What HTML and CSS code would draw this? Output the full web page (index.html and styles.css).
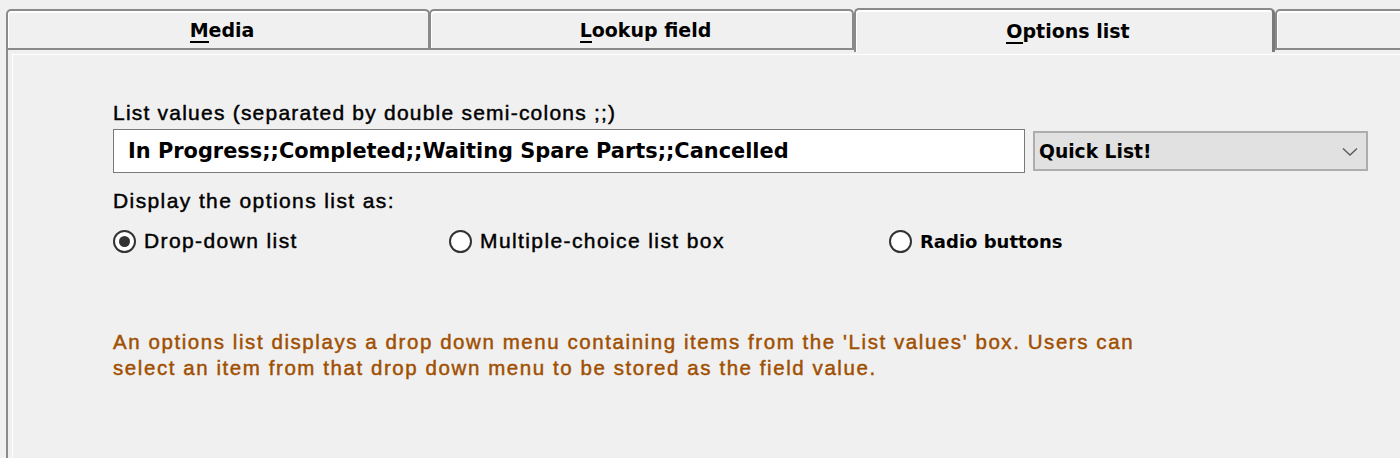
FILE: index.html
```html
<!DOCTYPE html>
<html>
<head>
<meta charset="utf-8">
<link rel="stylesheet" href="styles.css">
</head>
<body>
<div class="tabs">
  <div class="tab t1"><span class="tab-label"><u>M</u>edia</span></div>
  <div class="tab t2"><span class="tab-label"><u>L</u>ookup field</span></div>
  <div class="tab t3 selected"><span class="tab-label"><u>O</u>ptions list</span></div>
  <div class="tab t4"></div>
</div>
<div class="panel">
  <div class="label label1">List values (separated by double semi-colons ;;)</div>
  <div class="row">
    <div class="input">In Progress;;Completed;;Waiting Spare Parts;;Cancelled</div>
    <div class="select">
      <span>Quick List!</span>
      <svg class="chev" width="16" height="10" viewBox="0 0 16 10"><path d="M1 1.5 L8 8 L15 1.5" fill="none" stroke="#5a5a5a" stroke-width="1.4"/></svg>
    </div>
  </div>
  <div class="label label2">Display the options list as:</div>
  <div class="radios">
    <div class="radio r1"><span class="circle checked"></span><span class="rlabel">Drop-down list</span></div>
    <div class="radio r2"><span class="circle"></span><span class="rlabel">Multiple-choice list box</span></div>
    <div class="radio r3"><span class="circle"></span><span class="rlabel wide">Radio buttons</span></div>
  </div>
  <div class="note">An options list displays a drop down menu containing items from the 'List values' box. Users can<br>select an item from that drop down menu to be stored as the field value.</div>
</div>
</body>
</html>
```
FILE: styles.css
```css
html, body {
  margin: 0;
  padding: 0;
  background: #f0f0f0;
  width: 1400px;
  height: 458px;
  overflow: hidden;
  font-family: "Liberation Sans", Arial, sans-serif;
  color: #000;
}
.tabs {
  display: flex;
  align-items: flex-end;
  height: 48px;
  padding-left: 6px;
  position: relative;
  z-index: 2;
}
.tab {
  box-sizing: border-box;
  height: 39px;
  border: 2px solid #8a8a8a;
  border-bottom: none;
  border-radius: 5px 5px 0 0;
  background: #f0f0f0;
  box-shadow: inset 1px 2px 0 #fff;
  display: flex;
  justify-content: center;
  padding-top: 8px;
  padding-left: 8px;
  flex-shrink: 0;
}
.t1 { width: 424px; }
.t2 { width: 425px; margin-left: -1px; }
.t3 { width: 421px; }
.t4 { width: 160px; }
.tab.selected {
  height: 44px;
  margin-bottom: -4px;
  padding-top: 10px;
  border-right-color: #7a7a7a;
  border-right-width: 3px;
}
.tab-label {
  font-family: "DejaVu Sans", Verdana, sans-serif;
  font-weight: bold;
  font-size: 19px;
  line-height: 22px;
}
.tab-label u {
  text-decoration: none;
  border-bottom: 2px solid #000;
}
.panel {
  box-sizing: border-box;
  height: 410px;
  margin-left: 6px;
  border-left: 2px solid #8a8a8a;
  border-top: 2px solid #8a8a8a;
  box-shadow: inset 4px 4px 0 #f0f0f0, inset 5px 5px 0 #fff;
  padding: 50px 0 0 105px;
}
.label, .rlabel, .note {
  letter-spacing: 1.4px;
  -webkit-text-stroke: 0.45px currentColor;
}
.label {
  font-size: 21px;
  line-height: 26px;
  height: 28px;
}
.label1 {
  letter-spacing: 1.22px;
}
.row {
  display: flex;
  align-items: center;
  gap: 8px;
  height: 46px;
}
.input {
  box-sizing: border-box;
  width: 912px;
  height: 44px;
  background: #fff;
  border: 1px solid #7a7a7a;
  padding-left: 14px;
  display: flex;
  align-items: center;
  font-family: "DejaVu Sans", Verdana, sans-serif;
  font-weight: bold;
  font-size: 20.9px;
}
.select {
  box-sizing: border-box;
  width: 335px;
  height: 40px;
  background: #e1e1e1;
  border: 2px solid #adadad;
  display: flex;
  align-items: center;
  justify-content: space-between;
  padding: 0 8px 0 4px;
  font-family: "DejaVu Sans", Verdana, sans-serif;
  font-weight: bold;
  font-size: 18.7px;
}
.chev { display: block; margin-top: 2px; }
.label2 {
  margin-top: 14px;
}
.radios {
  display: flex;
  height: 44px;
  align-items: center;
  margin-top: 3px;
}
.radio {
  display: flex;
  align-items: center;
  gap: 8px;
}
.r1 { width: 336px; }
.r2 { width: 440px; }
.circle {
  box-sizing: border-box;
  width: 23px;
  height: 23px;
  border: 2px solid #333;
  border-radius: 50%;
  background: #fff;
  display: flex;
  align-items: center;
  justify-content: center;
}
.circle.checked::after {
  content: "";
  width: 11px;
  height: 11px;
  border-radius: 50%;
  background: #333;
}
.rlabel {
  font-size: 21px;
}
.rlabel.wide {
  font-family: "DejaVu Sans", Verdana, sans-serif;
  font-weight: bold;
  font-size: 18px;
  letter-spacing: 0;
  -webkit-text-stroke: 0;
}
.note {
  margin-top: 66px;
  color: #a04f00;
  font-size: 20.5px;
  line-height: 26px;
  letter-spacing: 1.57px;
}
```
